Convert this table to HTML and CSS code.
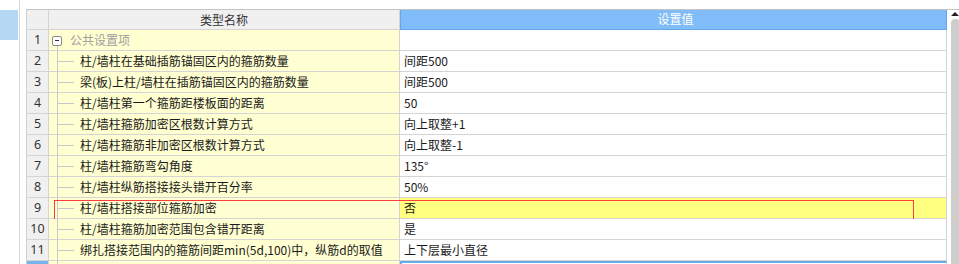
FILE: index.html
```html
<!DOCTYPE html>
<html lang="zh-CN">
<head>
<meta charset="utf-8">
<title>设置</title>
<link rel="stylesheet" href="styles.css">
</head>
<body>
<div class="page">
  <div class="side"><div class="side-tab"></div></div>
  <div class="wrap">
    <div class="grid">
      <div class="row head">
        <div class="c num"></div>
        <div class="c name">类型名称</div>
        <div class="c val">设置值</div>
      </div>
      <div class="row">
        <div class="c num">1</div>
        <div class="c name group"><span class="toggle"></span><span class="gtext">公共设置项</span></div>
        <div class="c val"></div>
      </div>
      <div class="row">
        <div class="c num">2</div>
        <div class="c name leaf">柱/墙柱在基础插筋锚固区内的箍筋数量</div>
        <div class="c val">间距500</div>
      </div>
      <div class="row">
        <div class="c num">3</div>
        <div class="c name leaf">梁(板)上柱/墙柱在插筋锚固区内的箍筋数量</div>
        <div class="c val">间距500</div>
      </div>
      <div class="row">
        <div class="c num">4</div>
        <div class="c name leaf">柱/墙柱第一个箍筋距楼板面的距离</div>
        <div class="c val">50</div>
      </div>
      <div class="row">
        <div class="c num">5</div>
        <div class="c name leaf">柱/墙柱箍筋加密区根数计算方式</div>
        <div class="c val">向上取整+1</div>
      </div>
      <div class="row">
        <div class="c num">6</div>
        <div class="c name leaf">柱/墙柱箍筋非加密区根数计算方式</div>
        <div class="c val">向上取整-1</div>
      </div>
      <div class="row">
        <div class="c num">7</div>
        <div class="c name leaf">柱/墙柱箍筋弯勾角度</div>
        <div class="c val">135°</div>
      </div>
      <div class="row">
        <div class="c num">8</div>
        <div class="c name leaf">柱/墙柱纵筋搭接接头错开百分率</div>
        <div class="c val">50%</div>
      </div>
      <div class="row marked">
        <div class="c num">9</div>
        <div class="c name leaf">柱/墙柱搭接部位箍筋加密</div>
        <div class="c val hl">否</div>
        <div class="redbox"></div>
      </div>
      <div class="row">
        <div class="c num">10</div>
        <div class="c name leaf">柱/墙柱箍筋加密范围包含错开距离</div>
        <div class="c val">是</div>
      </div>
      <div class="row">
        <div class="c num">11</div>
        <div class="c name leaf">绑扎搭接范围内的箍筋间距min(5d,100)中，纵筋d的取值</div>
        <div class="c val">上下层最小直径</div>
      </div>
      <div class="row">
        <div class="c num sel"></div>
        <div class="c name leaf"></div>
        <div class="c val cur"></div>
      </div>
    </div>
    <div class="scroll">
      <div class="arrow"></div>
      <div class="thumb"></div>
    </div>
  </div>
</div>
</body>
</html>
```
FILE: styles.css
```css
html, body {
  margin: 0;
  padding: 0;
  background: #ffffff;
  overflow: hidden;
}
body {
  font-family: "Noto Sans CJK SC", "Noto Sans", sans-serif;
  font-size: 12px;
  color: #1a1a1a;
}
.page {
  display: flex;
  width: 959px;
  height: 264px;
  overflow: hidden;
}
.side {
  width: 19px;
  border-right: 1px solid #d6d6d6;
  flex: none;
}
.side-tab {
  margin-top: 10px;
  width: 18px;
  height: 30px;
  background: #b4d7f4;
}
.wrap {
  margin-top: 9px;
  margin-left: 6px;
  border-top: 1px solid #c4c4c4;
  display: flex;
  flex: 1;
  align-items: flex-start;
}
.grid {
  border-left: 1px solid #cfcfcf;
  width: 921px;
  flex: none;
}
.row {
  display: grid;
  grid-template-columns: 22px 351px 547px;
  height: 21px;
  position: relative;
}
.row.head {
  height: 20px;
}
.c {
  box-sizing: border-box;
  border-right: 1px solid #d4d4d4;
  border-bottom: 1px solid #d4d4d4;
  line-height: 20px;
  white-space: nowrap;
  overflow: hidden;
}
.head .c {
  line-height: 19px;
  text-align: center;
  background: #f0f0f0;
  color: #333333;
}
.head .c.val {
  background: #80bcf8;
  color: #ffffff;
  border: 1px solid #64a6ec;
  border-top: 0;
  line-height: 18px;
}
.num {
  background: #f0f0f0;
  text-align: center;
  color: #333333;
  font-family: "Noto Sans", "Noto Sans CJK SC", sans-serif;
  font-size: 12.5px;
}
.name {
  background: #ffffd2;
}
.val {
  background: #ffffff;
  padding-left: 4px;
}
.val.hl {
  background: #ffff80;
}
.leaf {
  padding-left: 31px;
  background:
    linear-gradient(#c8c8c8, #c8c8c8) 8px 0 / 1px 100% no-repeat,
    linear-gradient(#c8c8c8, #c8c8c8) 9px 10px / 16px 1px no-repeat,
    #ffffd2;
}
.group {
  display: flex;
  align-items: center;
  background:
    linear-gradient(#c8c8c8, #c8c8c8) 8px 16px / 1px 100% no-repeat,
    #ffffd2;
}
.toggle {
  box-sizing: border-box;
  width: 10px;
  height: 10px;
  margin-left: 3px;
  margin-top: 1px;
  border: 1px solid #8a8a8a;
  border-radius: 2px;
  background:
    linear-gradient(#333333, #333333) center / 4px 1px no-repeat,
    #ffffff;
  flex: none;
}
.gtext {
  margin-left: 8px;
  color: #a0a0a0;
}
.num.sel {
  background: #78b3ec;
}
.val.cur {
  border-top: 2px solid #6aaae8;
  border-left: 2px solid #6aaae8;
}
.redbox {
  position: absolute;
  left: 27px;
  top: 2px;
  width: 860px;
  height: 21px;
  box-sizing: border-box;
  border: 1px solid #ff3c3c;
  pointer-events: none;
}
.scroll {
  margin-left: 2px;
  width: 10px;
  flex: none;
  display: flex;
  flex-direction: column;
  align-items: center;
}
.arrow {
  margin-top: 2px;
  width: 0;
  height: 0;
  border-left: 4px solid transparent;
  border-right: 4px solid transparent;
  border-bottom: 4px solid #222222;
}
.thumb {
  margin-top: 3px;
  width: 9px;
  height: 260px;
  background: #cdcdcd;
  border-radius: 4px 4px 0 0;
}
```
